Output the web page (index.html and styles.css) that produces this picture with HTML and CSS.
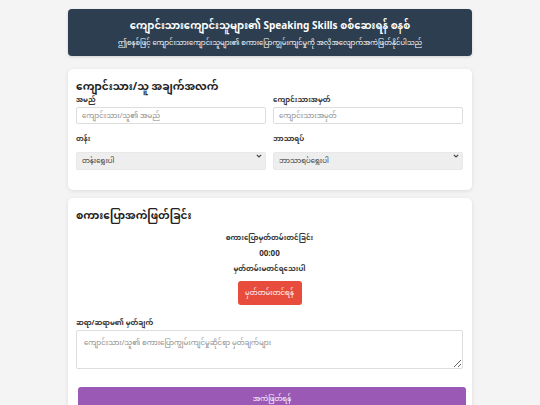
FILE: index.html
```html
<!DOCTYPE html>
<html lang="my">
<head>
<meta charset="utf-8">
<title>Speaking Skills</title>
<link rel="stylesheet" href="styles.css">
</head>
<body>
<div class="container">
  <header class="header">
    <h1 class="title">ကျောင်းသားကျောင်းသူများ၏ Speaking Skills စစ်ဆေးရန် စနစ်</h1>
    <p class="subtitle">ဤစနစ်ဖြင့် ကျောင်းသားကျောင်းသူများ၏ စကားပြောကျွမ်းကျင်မှုကို အလိုအလျောက်အကဲဖြတ်နိုင်ပါသည်</p>
  </header>

  <section class="card card-info">
    <h2 class="card-title">ကျောင်းသား/သူ အချက်အလက်</h2>
    <div class="grid">
      <div class="field">
        <label class="label">အမည်</label>
        <input class="input" type="text" placeholder="ကျောင်းသား/သူ၏ အမည်">
      </div>
      <div class="field">
        <label class="label">ကျောင်းသားအမှတ်</label>
        <input class="input" type="text" placeholder="ကျောင်းသားအမှတ်">
      </div>
      <div class="field">
        <label class="label">တန်း</label>
        <div class="select-wrap">
          <select class="select"><option>တန်းရွေးပါ</option></select>
          <svg class="chev" width="6" height="4" viewBox="0 0 6 4"><path d="M0.8 0.8 L3 3 L5.2 0.8" fill="none" stroke="#444" stroke-width="1.2"/></svg>
        </div>
      </div>
      <div class="field">
        <label class="label">ဘာသာရပ်</label>
        <div class="select-wrap">
          <select class="select"><option>ဘာသာရပ်ရွေးပါ</option></select>
          <svg class="chev" width="6" height="4" viewBox="0 0 6 4"><path d="M0.8 0.8 L3 3 L5.2 0.8" fill="none" stroke="#444" stroke-width="1.2"/></svg>
        </div>
      </div>
    </div>
  </section>

  <section class="card card-eval">
    <h2 class="card-title">စကားပြောအကဲဖြတ်ခြင်း</h2>
    <div class="recorder">
      <div class="rec-title">စကားပြောမှတ်တမ်းတင်ခြင်း</div>
      <div class="timer">00:00</div>
      <div class="status">မှတ်တမ်းမတင်ရသေးပါ</div>
      <button class="btn-record">မှတ်တမ်းတင်ရန်</button>
    </div>
    <label class="label">ဆရာ/ဆရာမ၏ မှတ်ချက်</label>
    <textarea class="textarea" placeholder="ကျောင်းသား/သူ၏ စကားပြောကျွမ်းကျင်မှုဆိုင်ရာ မှတ်ချက်များ"></textarea>
    <button class="btn-evaluate">အကဲဖြတ်ရန်</button>
  </section>
</div>
</body>
</html>
```

FILE: styles.css
```css
* { box-sizing: border-box; }
html, body { margin: 0; }
body {
  background: #f4f4f4;
  font-family: "Noto Sans", "Noto Sans Myanmar", "Liberation Sans", sans-serif;
  color: #333;
  padding-top: 9px;
}
.container {
  width: 404px;
  margin: 0 auto;
}
.header {
  background: #2c3e50;
  color: #fff;
  border-radius: 4px;
  height: 47px;
  padding-top: 7px;
  text-align: center;
  margin-bottom: 13px;
  box-shadow: 0 1px 3px rgba(0,0,0,0.15);
}
.title {
  margin: 0;
  font-size: 10px;
  font-weight: 700;
  line-height: 18px;
}
.subtitle {
  margin: 2px 0 0;
  font-size: 6.8px;
  line-height: 14px;
}
.card {
  background: #fff;
  border-radius: 5px;
  box-shadow: 0 1px 4px rgba(0,0,0,0.1);
  padding: 8px 9px 14px 8px;
  margin-bottom: 8px;
}
.card-info { height: 121px; }
.card-title {
  margin: 0;
  font-size: 10.5px;
  font-weight: 700;
  line-height: 18px;
  color: #222;
}
.grid {
  display: grid;
  grid-template-columns: 1fr 1fr;
  column-gap: 7px;
  row-gap: 10px;
}
.field { display: flex; flex-direction: column; }
.label {
  display: block;
  font-size: 7px;
  font-weight: 700;
  line-height: 10px;
  margin-bottom: 2px;
  color: #333;
}
.input, .select {
  height: 17px;
  font-family: inherit;
  font-size: 7px;
  padding: 0 5px;
  border: 1px solid #ddd;
  border-radius: 2px;
  background: #fff;
  color: #333;
}
.input::placeholder, .textarea::placeholder { color: #888; }
.select-wrap { position: relative; }
.select {
  width: 100%;
  height: 18px;
  background: #eee;
  border-color: #e8e8e8;
  appearance: none;
  -webkit-appearance: none;
}
.chev {
  position: absolute;
  right: 4px;
  top: 8px;
}
.recorder {
  text-align: center;
  padding-top: 7px;
}
.rec-title { font-size: 7px; font-weight: 700; line-height: 14px; }
.timer { font-size: 8px; font-weight: 700; line-height: 16px; }
.status { font-size: 7px; font-weight: 700; line-height: 15px; }
.btn-record {
  margin-top: 5px;
  width: 64px;
  height: 24px;
  border: 0;
  border-radius: 3px;
  background: #e74c3c;
  color: #fff;
  font-family: inherit;
  font-size: 7px;
}
.card-eval .label { margin-top: 13px; }
.textarea {
  display: block;
  width: 100%;
  height: 39px;
  border: 1px solid #ddd;
  border-radius: 2px;
  font-family: inherit;
  font-size: 7px;
  padding: 5px 7px;
  resize: vertical;
}
.btn-evaluate {
  display: block;
  margin: 18px 0 0 2px;
  width: 388px;
  height: 24px;
  border: 0;
  border-radius: 3px;
  background: #9b59b6;
  color: #fff;
  font-family: inherit;
  font-size: 7px;
}
```
